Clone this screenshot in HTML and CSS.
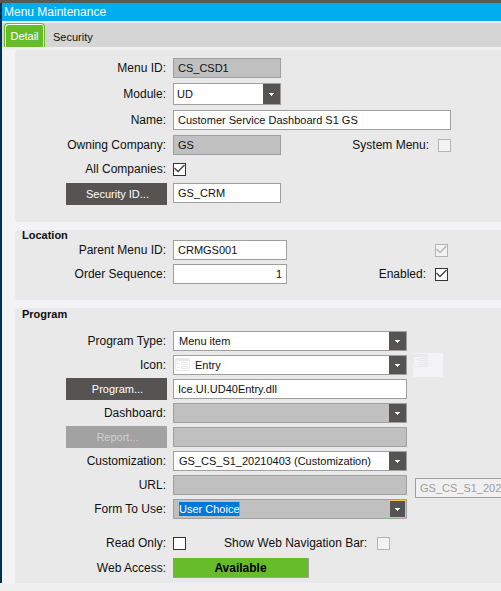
FILE: index.html
```
<!DOCTYPE html>
<html lang="en">
<head>
<meta charset="utf-8">
<title>Menu Maintenance</title>
<link rel="stylesheet" href="styles.css">
</head>
<body>
<svg class="defs" aria-hidden="true">
  <symbol id="arrow" viewBox="0 0 5 3"><path d="M0 0h5v1h-1v1h-1v1h-1v-1h-1v-1h-1z"/></symbol>
  <symbol id="entry" viewBox="0 0 15 13">
    <path d="M0 2a2 2 0 0 1 2-2h11a2 2 0 0 1 2 2v9a2 2 0 0 1-2 2H2a2 2 0 0 1-2-2zM1 3v8l1 1h11l1-1V3z" fill-rule="evenodd"/>
    <path d="M2 5h3v1H2zM2 9h3v1H2zM6 4h7v3H6zM7 5v1h5V5zM6 8h7v3H6zM7 9v1h5V9z" fill-rule="evenodd"/>
  </symbol>
</svg>
<div class="window">
  <header class="title-bar"><h1>Menu Maintenance</h1></header>
  <nav class="tabs">
    <button type="button" class="tab active">Detail</button>
    <button type="button" class="tab">Security</button>
  </nav>
  <main class="content">
    <section class="panel general">
      <div class="row">
        <label class="name" for="menu-id">Menu ID:</label>
        <input class="box short readonly" id="menu-id" type="text" value="CS_CSD1" readonly>
      </div>
      <div class="row">
        <label class="name" for="module">Module:</label>
        <span class="combo short tall"><select class="box" id="module"><option>UD</option></select><span class="drop"><svg><use href="#arrow"/></svg></span></span>
      </div>
      <div class="row">
        <label class="name" for="menu-name">Name:</label>
        <input class="box fill" id="menu-name" type="text" value="Customer Service Dashboard S1 GS">
      </div>
      <div class="row">
        <label class="name" for="company">Owning Company:</label>
        <input class="box short readonly" id="company" type="text" value="GS" readonly>
        <span class="side"><label for="system-menu">System Menu:</label><input type="checkbox" id="system-menu" disabled></span>
      </div>
      <div class="row slim">
        <label class="name" for="all-companies">All Companies:</label>
        <input type="checkbox" id="all-companies" checked>
      </div>
      <div class="row top">
        <button type="button" class="action">Security ID...</button>
        <input class="box short" type="text" value="GS_CRM" aria-label="Security ID">
      </div>
    </section>

    <section class="panel location">
      <h2>Location</h2>
      <div class="row">
        <label class="name" for="parent-id">Parent Menu ID:</label>
        <input class="box medium" id="parent-id" type="text" value="CRMGS001">
        <span class="side"><input type="checkbox" aria-label="Parent enabled" checked disabled></span>
      </div>
      <div class="row">
        <label class="name" for="sequence">Order Sequence:</label>
        <input class="box medium number" id="sequence" type="text" value="1">
        <span class="side"><label for="enabled">Enabled:</label><input type="checkbox" id="enabled" checked></span>
      </div>
    </section>

    <section class="panel program">
      <h2>Program</h2>
      <div class="row">
        <label class="name" for="program-type">Program Type:</label>
        <span class="combo long"><select class="box" id="program-type"><option>Menu item</option></select><span class="drop"><svg><use href="#arrow"/></svg></span></span>
      </div>
      <div class="row">
        <label class="name" for="icon">Icon:</label>
        <span class="combo long with-icon"><select class="box" id="icon"><option>Entry</option></select><svg class="entry-icon"><use href="#entry"/></svg><span class="drop"><svg><use href="#arrow"/></svg></span></span>
        <span class="preview"><svg class="preview-icon"><use href="#entry"/></svg></span>
      </div>
      <div class="row">
        <button type="button" class="action">Program...</button>
        <input class="box long" type="text" value="Ice.UI.UD40Entry.dll" aria-label="Program">
      </div>
      <div class="row">
        <label class="name" for="dashboard">Dashboard:</label>
        <span class="combo long"><select class="box readonly" id="dashboard"><option></option></select><span class="drop"><svg><use href="#arrow"/></svg></span></span>
      </div>
      <div class="row">
        <button type="button" class="action" disabled>Report...</button>
        <input class="box long readonly" type="text" readonly aria-label="Report">
      </div>
      <div class="row">
        <label class="name" for="customization">Customization:</label>
        <span class="combo long"><select class="box" id="customization"><option>GS_CS_S1_20210403 (Customization)</option></select><span class="drop"><svg><use href="#arrow"/></svg></span></span>
      </div>
      <div class="row">
        <label class="name" for="url">URL:</label>
        <input class="box long readonly" id="url" type="text" readonly>
        <input class="box long ghost" type="text" value="GS_CS_S1_20210403" disabled aria-label="Customization name">
      </div>
      <div class="row">
        <label class="name" for="form">Form To Use:</label>
        <span class="combo long focused"><select class="box readonly" id="form"><option>User Choice</option></select><span class="drop"><svg><use href="#arrow"/></svg></span></span>
      </div>
      <div class="row flags">
        <label class="name" for="read-only">Read Only:</label>
        <input type="checkbox" id="read-only">
        <label class="nav-label" for="nav-bar">Show Web Navigation Bar:</label>
        <input type="checkbox" id="nav-bar" disabled>
      </div>
      <div class="row">
        <span class="name">Web Access:</span>
        <output class="status">Available</output>
      </div>
    </section>
  </main>
</div>
</body>
</html>
```
FILE: styles.css
```
* { box-sizing: border-box; }

body {
  margin: 0;
  background: #f0f0f0;
  color: #101010;
  font: 12px/16px "Liberation Sans", Arial, sans-serif;
}

input, select, button { margin: 0; font: inherit; color: inherit; }
h1, h2 { margin: 0; font-size: 11px; }
svg { display: block; }
.defs { display: none; }

.window {
  border-top: 3px solid #5a5856;
  background: linear-gradient(to right, #003052 2px, #f3f3f6 2px);
}

.title-bar {
  height: 18px;
  margin-left: 2px;
  padding: 1px 2px;
  background: #00adef;
  color: #fff;
}
.title-bar h1 { font-size: 12px; font-weight: 400; line-height: 16px; }

.tabs {
  display: flex;
  height: 29px;
  margin-left: 2px;
  padding-left: 2px;
  border-top: 2px solid #f0f0f0;
  border-bottom: 3px solid #f0f0f0;
  background: #d5d5d5;
}
.tab {
  padding: 3px 8px 0;
  border: 0;
  background: none;
  font-size: 11px;
}
.tab.active {
  width: 41px;
  padding: 0;
  border: 1px solid #66bc29;
  border-bottom: 0;
  border-radius: 4px 4px 0 0;
  background: #66bc29;
  box-shadow: inset 1px 1px #fff, inset -1px 0 #fff;
  color: #fff;
}

.content { display: grid; gap: 8px; padding-left: 15px; }

.panel {
  display: flex;
  flex-direction: column;
  overflow: hidden;
  border-radius: 4px 0 0 4px;
  background: #e9e9e9;
}
.panel h2 { padding-left: 7px; line-height: 10px; }

.general { gap: 5px; padding: 8px 50px 17px 0; }
.location { gap: 4px; padding: 0 53px 16px 0; }
.location h2 { margin-bottom: -4px; }
.program { padding: 1px 0 3px; border-bottom-left-radius: 0; }
.program h2 { margin-bottom: 10px; }
.program .row { height: 24px; }
.program .flags { margin-top: 9px; height: 26px; }

.row { display: flex; align-items: center; }
.row.slim { height: 18px; }
.row.top { align-items: flex-start; }
.name { flex: none; width: 151px; margin-right: 7px; text-align: right; }
.side { display: flex; align-items: center; gap: 9px; margin-left: auto; }

.box {
  flex: none;
  height: 20px;
  padding: 0 4px;
  border: 1px solid #9f9f9f;
  border-radius: 0;
  outline: 0;
  background: #fff;
  font-size: 11px;
}
.readonly { background-color: #c0c0c0; }
.short { width: 108px; }
.medium { width: 114px; }
.long { width: 234px; }
.fill { flex: 1; min-width: 0; }
.number { text-align: right; }
.ghost {
  position: relative;
  top: 3px;
  margin-left: 8px;
  background: #f0f0f0;
  color: #9c9c9c;
}

.combo { position: relative; flex: none; height: 20px; }
.combo.tall { height: 22px; }
.combo .box {
  width: 100%;
  height: 100%;
  padding: 0 5px;
  appearance: none;
  opacity: 1;
}
.combo.short .box { padding-left: 3px; }
.combo.with-icon .box { padding-left: 21px; }
.drop {
  position: absolute;
  top: 1px;
  right: 1px;
  bottom: 1px;
  display: grid;
  place-items: center;
  width: 17px;
  background: #555453;
  pointer-events: none;
}
.drop svg { width: 5px; height: 3px; fill: #fff; }
.focused .drop { border: 1px solid #f2c744; }
.focused .box {
  background-image: linear-gradient(to right, #0078d7 60px, #f08040 60px);
  background-position: 5px center;
  background-repeat: no-repeat;
  background-size: 61px 14px;
  color: #fff;
}
.entry-icon { position: absolute; top: 3px; left: 2px; width: 15px; height: 13px; fill: #e9e9e9; }
.preview { width: 30px; height: 24px; margin-left: 6px; padding: 1px 0; background: #f3f3f6; }
.preview-icon { width: 15px; height: 13px; fill: #e9e9e9; }

input[type="checkbox"] {
  flex: none;
  width: 13px;
  height: 13px;
  border: 1px solid #333;
  appearance: none;
  background: #fff;
}
input[type="checkbox"]:checked::before {
  content: "";
  display: block;
  width: 11px;
  height: 11px;
  background: #444;
  clip-path: polygon(0 5px, 1px 4px, 4px 7px, 10px 1px, 11px 2px, 4px 9px);
}
input[type="checkbox"]:disabled { border-color: #b4b4b4; background: #f3f3f3; }
input[type="checkbox"]:disabled::before { background: #b4b4b4; }

.action {
  flex: none;
  width: 101px;
  height: 22px;
  margin: 0 6px 0 51px;
  padding: 0 0 0 2px;
  border: 0;
  background: #555453;
  color: #fff;
  font-size: 11px;
}
.action:disabled { background: #a2a2a2; color: #d0d0d0; }

.nav-label { margin: 0 10px 0 38px; }
.status {
  width: 136px;
  height: 20px;
  border: solid #9f9f9f;
  border-width: 0 1px 1px 0;
  background: #66bc29;
  color: #000;
  font-weight: 700;
  line-height: 20px;
  text-align: center;
}
```
